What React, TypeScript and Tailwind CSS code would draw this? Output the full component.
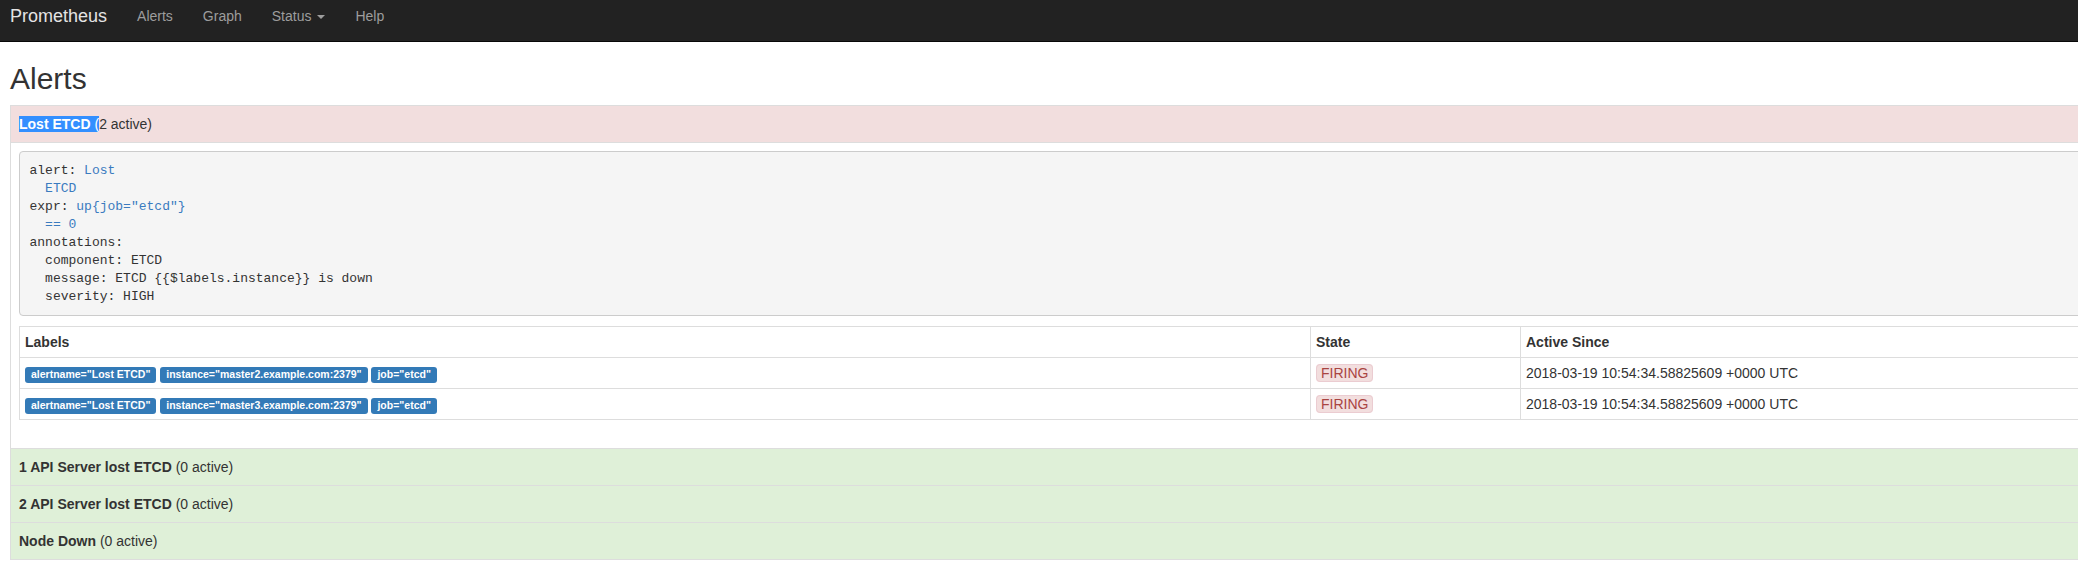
import * as React from "react";

const labelRows = [
  { instance: "master2.example.com:2379" },
  { instance: "master3.example.com:2379" },
];

const okAlerts = ["1 API Server lost ETCD", "2 API Server lost ETCD", "Node Down"];

function Badge({ text }: { text: string }) {
  return (
    <span className="inline-block rounded-[3px] bg-[#337ab7] px-[6px] pt-[2.1px] pb-[3.15px] text-[10.5px] font-bold leading-none text-white">
      {text}
    </span>
  );
}

export default function App() {
  return (
    <div className="w-full overflow-hidden bg-white font-['Liberation_Sans',Arial,sans-serif] text-[14px] leading-[20px] text-[#333]">
      {/* Navbar */}
      <nav className="flex h-[42px] w-[2400px] items-start border-b border-[#080808] bg-[#222] pt-[6px]">
        <span className="pl-[10px] pr-[15px] text-[18px] leading-[20px] text-[#e4e4e4]">Prometheus</span>
        <span className="px-[15px] text-[#9d9d9d]">Alerts</span>
        <span className="px-[15px] text-[#9d9d9d]">Graph</span>
        <span className="px-[15px] text-[#9d9d9d]">
          Status{" "}
          <span className="ml-[2px] inline-block h-0 w-0 border-x-[4px] border-t-[4px] border-x-transparent border-t-[#9d9d9d] align-middle" />
        </span>
        <span className="px-[15px] text-[#9d9d9d]">Help</span>
      </nav>

      <div className="w-[2400px] px-[10px]">
        <h2 className="mt-[20px] mb-[10px] text-[30px] leading-[33px] font-normal">Alerts</h2>

        {/* Firing alert */}
        <div className="w-[2390px] border border-[#ddd]">
          <div className="border-b border-[#ddd] bg-[#f2dede] p-[8px]">
            <span className="bg-[#338fff] text-white">
              <b>Lost ETCD </b>(
            </span>
            2 active)
          </div>
          <div className="p-[8px]">
            <pre className="m-0 mb-[10px] whitespace-pre rounded-[4px] border border-[#ccc] bg-[#f5f5f5] p-[9.5px] font-['Liberation_Mono',monospace] text-[13px] leading-[18px] text-[#333]">
              {"alert: "}
              <span className="text-[#3a7bbf]">Lost</span>
              {"\n  "}
              <span className="text-[#3a7bbf]">ETCD</span>
              {"\nexpr: "}
              <span className="text-[#3a7bbf]">{'up{job="etcd"}'}</span>
              {"\n  "}
              <span className="text-[#3a7bbf]">== 0</span>
              {"\nannotations:\n  component: ETCD\n  message: ETCD {{$labels.instance}} is down\n  severity: HIGH"}
            </pre>
            <table className="mb-[20px] w-full table-fixed border-collapse border border-[#ddd]">
              <thead>
                <tr>
                  <th className="w-[1291px] border border-[#ddd] p-[5px] text-left font-bold">Labels</th>
                  <th className="w-[210px] border border-[#ddd] p-[5px] text-left font-bold">State</th>
                  <th className="border border-[#ddd] p-[5px] text-left font-bold">Active Since</th>
                </tr>
              </thead>
              <tbody>
                {labelRows.map((row) => (
                  <tr key={row.instance}>
                    <td className="border border-[#ddd] p-[5px]">
                      <Badge text='alertname="Lost ETCD"' />{" "}
                      <Badge text={`instance="${row.instance}"`} />{" "}
                      <Badge text='job="etcd"' />
                    </td>
                    <td className="border border-[#ddd] p-[5px]">
                      <span className="rounded-[4px] border border-[#ebccd1] bg-[#f2dede] px-[4px] text-[#a94442]">FIRING</span>
                    </td>
                    <td className="border border-[#ddd] p-[5px]">2018-03-19 10:54:34.58825609 +0000 UTC</td>
                  </tr>
                ))}
              </tbody>
            </table>
          </div>
        </div>

        {/* Inactive alerts */}
        {okAlerts.map((name) => (
          <div key={name} className="w-[2390px] border-x border-b border-[#ddd] bg-[#dff0d8] p-[8px]">
            <b>{name}</b> (0 active)
          </div>
        ))}
      </div>
    </div>
  );
}
